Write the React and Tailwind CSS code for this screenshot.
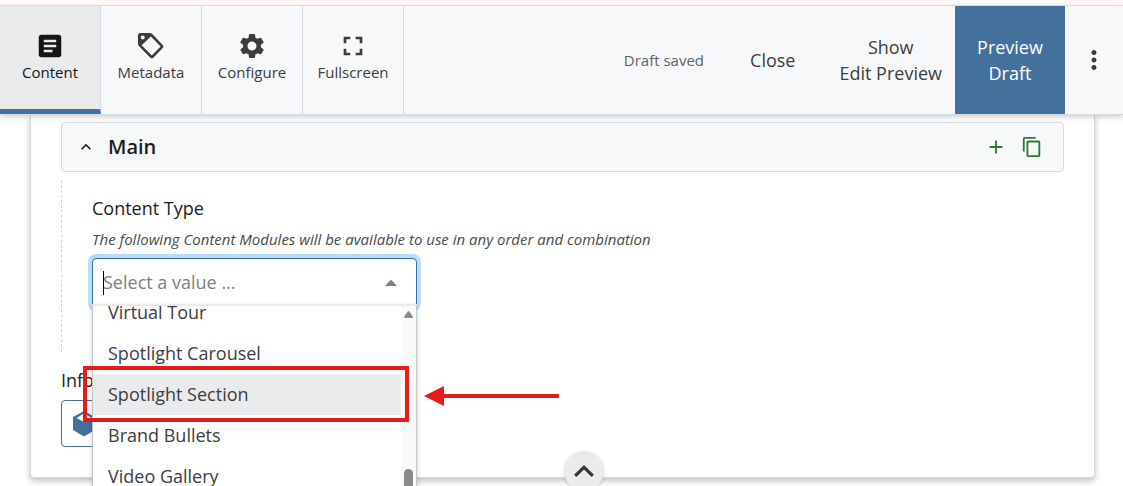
import { MdArticle, MdSettings, MdFullscreen, MdMoreVert, MdContentCopy, MdAdd, MdKeyboardArrowUp } from "react-icons/md";

function TagIcon() {
  return (
    <svg width="26" height="26" viewBox="0 0 26 26" fill="currentColor" aria-hidden="true">
      <path
        fillRule="evenodd"
        d="M2.5 0H12Q13.200 0 14 .8L24.8 12Q26 13.600 24.800 15L15.300 24.700Q13.900 26 12.400 24.700L.8 13Q0 12.200 0 11V2.500Q0 0 2.500 0ZM12.900 3.600L3.600 12.300L13.800 22.600L22.600 13.600ZM4.700 2.500A2 2 0 1 0 4.700 6.500A2 2 0 1 0 4.700 2.500Z"
      />
    </svg>
  );
}

const tabs = [
  { label: "Content", icon: <MdArticle size={30} />, active: true },
  { label: "Metadata", icon: <TagIcon /> },
  { label: "Configure", icon: <MdSettings size={30} /> },
  { label: "Fullscreen", icon: <MdFullscreen size={32} /> },
];

const options = ["Virtual Tour", "Spotlight Carousel", "Spotlight Section", "Brand Bullets", "Video Gallery"];

function Header() {
  return (
    <header className="relative z-10 flex h-[109px] shrink-0 border-b border-[#d3dbe4] bg-[#f6f8fa] text-[#3d3d3d] shadow-[0_2px_6px_rgba(0,0,0,0.2)]">
      <nav className="flex">
        {tabs.map((t) => (
          <button
            key={t.label}
            type="button"
            className={
              t.active
                ? "flex w-[101px] flex-col items-center border-r border-b-[5px] border-r-[#d5dae1] border-b-[#43719b] bg-[#eaebed] pt-6 text-[#151515]"
                : "flex w-[101px] flex-col items-center border-r border-[#d5dae1] pt-6"
            }
          >
            <span className="flex h-8 items-center">{t.icon}</span>
            <span className="text-[15px] leading-5">{t.label}</span>
          </button>
        ))}
      </nav>
      <div className="ml-auto flex items-stretch text-[18px] leading-[26px]">
        <span className="flex items-center pr-[22px] text-[15px] text-[#5f6265]">Draft saved</span>
        <button type="button" className="px-6">Close</button>
        <button type="button" className="pr-[13px] pl-5">
          Show
          <br />
          Edit Preview
        </button>
        <button type="button" className="w-[110px] bg-[#43719b] font-medium text-white">
          Preview
          <br />
          Draft
        </button>
        <button type="button" aria-label="More actions" className="flex w-[58px] items-center justify-center">
          <MdMoreVert size={30} />
        </button>
      </div>
    </header>
  );
}

function ContentTypeSelect() {
  return (
    <div className="relative mt-2 w-[325px]">
      <div className="flex h-[49px] items-center rounded border border-[#3b6e9f] bg-white pr-[18px] pl-2.5 shadow-[0_0_0_4px_#b9dcf8]">
        <span className="-mr-px h-6 w-px shrink-0 bg-black" />
        <input
          id="content-type"
          role="combobox"
          aria-expanded="true"
          aria-controls="content-type-options"
          placeholder="Select a value ..."
          className="min-w-0 flex-1 bg-transparent text-[18px] outline-none placeholder:text-[#808080]"
        />
        <svg width="14" height="7" viewBox="0 0 14 7" fill="#808080" aria-hidden="true">
          <path d="M1 7L7 .5L13 7Z" />
        </svg>
      </div>
      <div className="absolute top-[46px] left-0 flex h-60 w-full overflow-hidden border-x border-t-2 border-x-[#c4c6c8] border-t-[#ebebeb] bg-white shadow-[0_2px_5px_rgba(0,0,0,0.2)]">
        <ul id="content-type-options" role="listbox" className="-mt-3.5 flex-1">
          {options.map((o) => (
            <li
              key={o}
              role="option"
              aria-selected={o === "Spotlight Section"}
              className="flex h-[41px] items-center px-[15px] text-[18px] text-[#3d3d3d] aria-selected:bg-[#eaebed]"
            >
              {o}
            </li>
          ))}
        </ul>
        <div className="flex w-[15px] flex-col items-center bg-[#fafafa] pt-[5px]">
          <svg width="9" height="7" viewBox="0 0 9 7" fill="#8b8b8b" aria-hidden="true">
            <path d="M3.600.5Q4.500-.5 5.400.5L8.800 5.500Q9 7 8 7H1Q0 7 .2 5.500Z" />
          </svg>
          <span className="mt-[151px] h-16 w-[9px] rounded-full bg-[#8b8b8b]" />
        </div>
      </div>
      <div className="absolute top-[108px] -left-[9px] h-14 w-[326px] border-4 border-[#e71b1b]" />
      <svg className="absolute top-32 left-[332px]" width="135" height="20" viewBox="0 0 135 20" fill="#e71b1b" aria-hidden="true">
        <path d="M0 10L20 0V8H135V12H20V20Z" />
      </svg>
    </div>
  );
}

export default function App() {
  return (
    <div className="relative flex h-screen flex-col overflow-hidden bg-white font-['Open_Sans','Noto_Sans',sans-serif] text-[#1c1c1c]">
      <div className="h-1.5 shrink-0 border-b border-[#f5d9df] bg-[#fff8f7]" />
      <Header />
      <main className="mr-7 ml-[30px] h-[363px] shrink-0 rounded-b border border-t-0 border-[#d5d8dd] bg-white px-[30px] pt-[7px] shadow-[0_3px_6px_rgba(0,0,0,0.25)]">
        <section>
          <div className="flex h-[50px] items-center rounded border border-[#d5d9e0] bg-[#f6f8fa] pr-5 pl-3.5">
            <button type="button" aria-label="Collapse Main">
              <MdKeyboardArrowUp size={20} />
            </button>
            <h2 className="ml-3 text-[20px] font-semibold">Main</h2>
            <button type="button" aria-label="Add" className="ml-auto text-[#2c7a34]">
              <MdAdd size={22} />
            </button>
            <button type="button" aria-label="Copy" className="ml-3.5 text-[#2c7a34]">
              <MdContentCopy size={22} />
            </button>
          </div>
          <div className="mt-2 h-[172px] border-l border-dashed border-[#d4d4d4] pt-4 pl-[30px]">
            <label htmlFor="content-type" className="block text-[18px] leading-6">Content Type</label>
            <p className="mt-2 text-[15px] leading-[22px] text-[#4a4a4a] italic">
              The following Content Modules will be available to use in any order and combination
            </p>
            <ContentTypeSelect />
          </div>
        </section>
        <section className="pt-4">
          <h3 className="text-[18px] leading-6">Info</h3>
          <button type="button" aria-label="Choose block" className="mt-2 flex h-[47px] w-40 items-center rounded border border-[#43719b] pl-2.5">
            <svg width="24" height="26" viewBox="0 0 24 26" fill="#43719b" aria-hidden="true">
              <path fillRule="evenodd" d="M12 0L23 6V19L12 25.500L1 19V6ZM12 2.500L4.500 7L12 11L19.500 7Z" />
            </svg>
          </button>
        </section>
      </main>
      <button
        type="button"
        aria-label="Back to top"
        className="absolute -bottom-[5px] left-[52%] flex size-10 -translate-x-1/2 items-center justify-center rounded-full bg-[#eaebed] text-[#383838] shadow-[0_1px_3px_rgba(0,0,0,0.2)]"
      >
        <svg width="20" height="12" viewBox="0 0 20 12" fill="none" stroke="currentColor" strokeWidth="3.200" aria-hidden="true">
          <path d="M1.200 10.800L10 2.300L18.800 10.800" />
        </svg>
      </button>
    </div>
  );
}
